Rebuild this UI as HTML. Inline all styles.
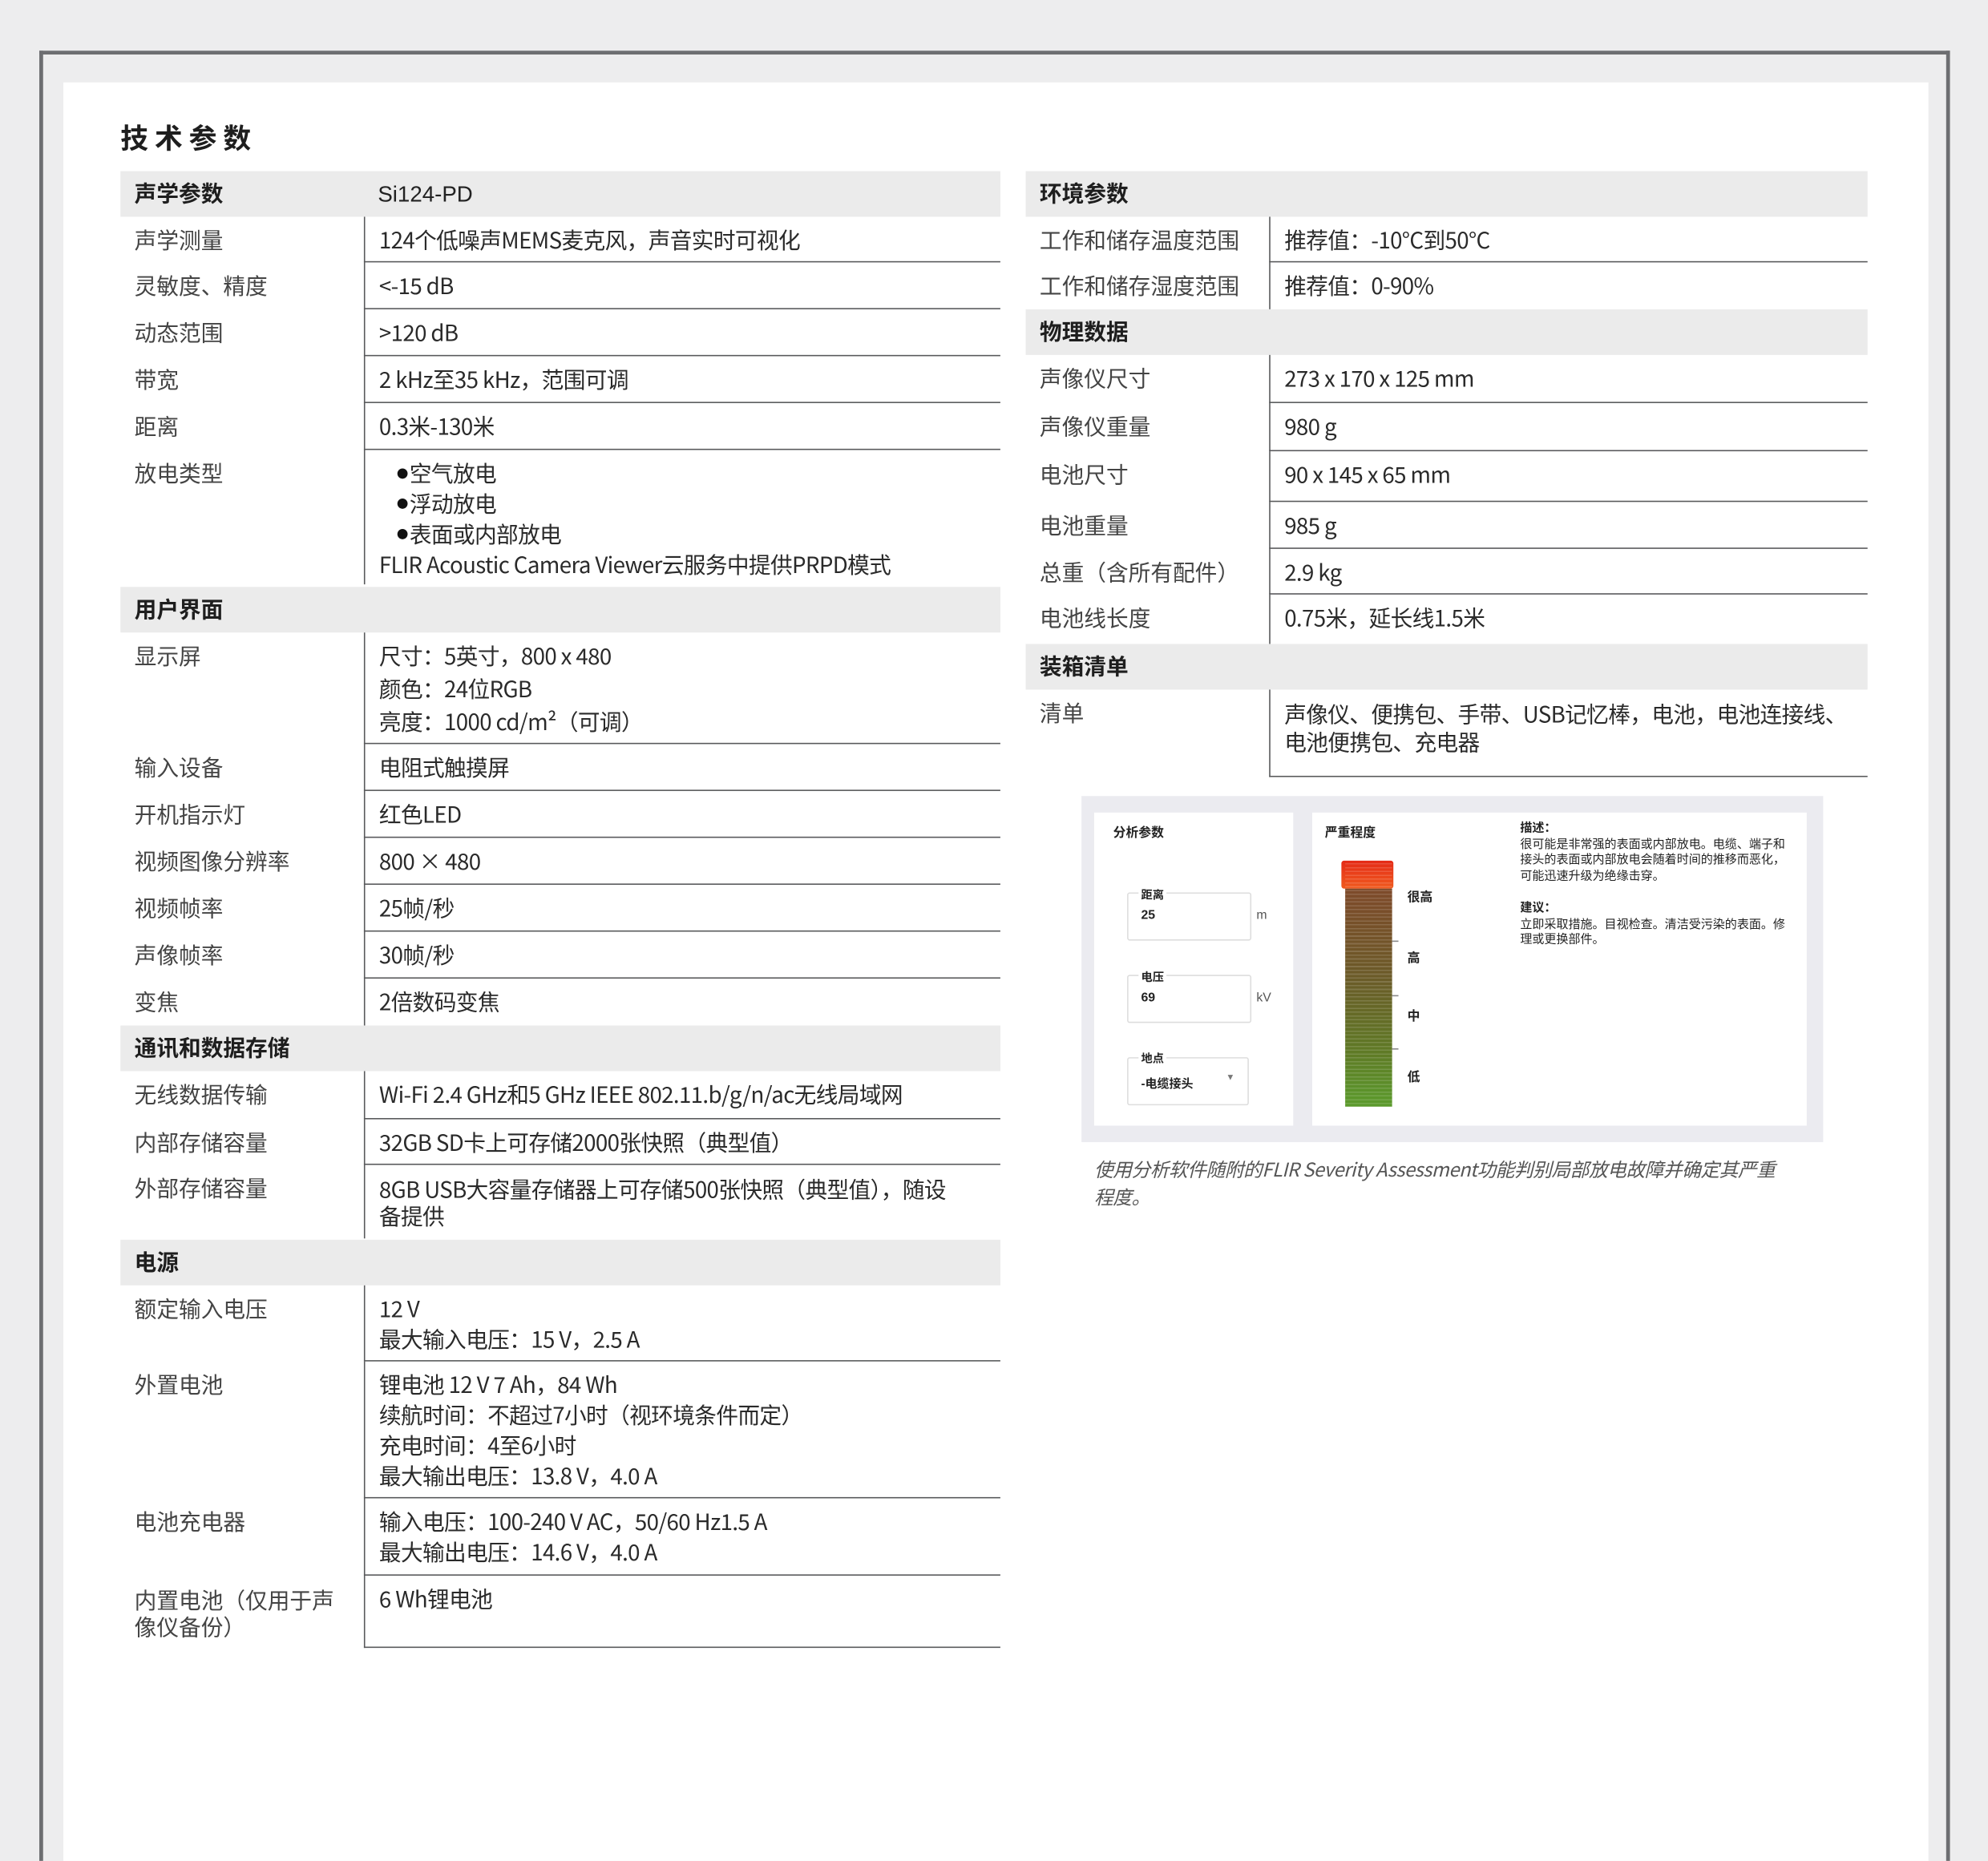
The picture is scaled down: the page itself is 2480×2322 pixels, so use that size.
<!DOCTYPE html>
<html><head><meta charset="utf-8"><style>
html,body{margin:0;padding:0;background:#ededee;overflow:hidden;}
#w{position:absolute;left:0;top:0;width:1568px;height:1468px;transform:scale(1.58163);transform-origin:0 0;background:#ededee;overflow:hidden;
font-family:"Liberation Sans Narrow","Noto Sans CJK SC",sans-serif;color:#3a3a3a;}
.frame{position:absolute;left:31px;top:40px;width:1501px;height:1460px;border:3px solid #6d6e71;border-bottom:none;background:#ededee;}
.panel{position:absolute;left:50px;top:65px;width:1471px;height:1440px;background:#fff;}
.a{position:absolute;}
.h{position:absolute;background:#ebebeb;height:36px;font-family:"Liberation Sans","Noto Sans CJK SC",sans-serif;font-weight:bold;font-size:17.5px;color:#1e1e1e;line-height:36px;padding-left:11px;box-sizing:border-box;}
.r{position:absolute;font-size:17.5px;}
.r .l{position:absolute;left:11px;top:7px;line-height:24px;color:#444;}
.r .v{position:absolute;left:192px;top:0;bottom:0;right:0;border-left:1.2px solid #58595b;border-bottom:1.2px solid #58595b;padding:7px 0 0 11px;line-height:24px;color:#2a2a2a;box-sizing:border-box;letter-spacing:-0.4px;}
.L{left:95px;width:694px;}
.R{left:809px;width:664px;}
.cb{position:absolute;font-family:"Liberation Sans","Noto Sans CJK SC",sans-serif;color:#222;}
.bu{display:inline-block;width:10px;font-size:9px;vertical-align:3px;color:#111}
</style></head><body><div id="w">
<div class="frame"></div>
<div class="panel"></div>
<div class="a" style="left:95px;top:92px;font-family:'Liberation Sans','Noto Sans CJK SC',sans-serif;font-weight:bold;font-size:22px;letter-spacing:5px;color:#1e1e1e;">技术参数</div>

<!-- LEFT -->
<div class="h L" style="top:135px">声学参数<span style="position:absolute;left:203px;font-family:'Liberation Sans Narrow',sans-serif;font-weight:normal;color:#222">Si124-PD</span></div>
<div class="r L" style="top:171px;height:36px"><div class="l">声学测量</div><div class="v">124个低噪声MEMS麦克风，声音实时可视化</div></div>
<div class="r L" style="top:207px;height:37px"><div class="l">灵敏度、精度</div><div class="v">&lt;-15 dB</div></div>
<div class="r L" style="top:244px;height:37px"><div class="l">动态范围</div><div class="v">&gt;120 dB</div></div>
<div class="r L" style="top:281px;height:37px"><div class="l">带宽</div><div class="v">2 kHz至35 kHz，范围可调</div></div>
<div class="r L" style="top:318px;height:37px"><div class="l">距离</div><div class="v">0.3米-130米</div></div>
<div class="r L" style="top:355px;height:106px"><div class="l">放电类型</div><div class="v" style="border-bottom:none"><div style="padding-left:14px"><span class="bu">●</span>空气放电<br><span class="bu">●</span>浮动放电<br><span class="bu">●</span>表面或内部放电</div>FLIR Acoustic Camera Viewer云服务中提供PRPD模式</div></div>

<div class="h L" style="top:463px">用户界面</div>
<div class="r L" style="top:499px;height:88px"><div class="l">显示屏</div><div class="v" style="line-height:26px;padding-top:6px">尺寸：5英寸，800 x 480<br>颜色：24位RGB<br>亮度：1000 cd/m²（可调）</div></div>
<div class="r L" style="top:587px;height:37px"><div class="l">输入设备</div><div class="v">电阻式触摸屏</div></div>
<div class="r L" style="top:624px;height:37px"><div class="l">开机指示灯</div><div class="v">红色LED</div></div>
<div class="r L" style="top:661px;height:37px"><div class="l">视频图像分辨率</div><div class="v">800 × 480</div></div>
<div class="r L" style="top:698px;height:37px"><div class="l">视频帧率</div><div class="v">25帧/秒</div></div>
<div class="r L" style="top:735px;height:37px"><div class="l">声像帧率</div><div class="v">30帧/秒</div></div>
<div class="r L" style="top:772px;height:37px"><div class="l">变焦</div><div class="v" style="border-bottom:none">2倍数码变焦</div></div>

<div class="h L" style="top:809px">通讯和数据存储</div>
<div class="r L" style="top:845px;height:38px"><div class="l">无线数据传输</div><div class="v">Wi-Fi 2.4 GHz和5 GHz IEEE 802.11.b/g/n/ac无线局域网</div></div>
<div class="r L" style="top:883px;height:36px"><div class="l">内部存储容量</div><div class="v">32GB SD卡上可存储2000张快照（典型值）</div></div>
<div class="r L" style="top:919px;height:58px"><div class="l">外部存储容量</div><div class="v" style="line-height:21px;padding-top:9px;border-bottom:none">8GB USB大容量存储器上可存储500张快照（典型值），随设<br>备提供</div></div>

<div class="h L" style="top:978px">电源</div>
<div class="r L" style="top:1014px;height:60px"><div class="l">额定输入电压</div><div class="v">12 V<br>最大输入电压：15 V，2.5 A</div></div>
<div class="r L" style="top:1074px;height:108px"><div class="l">外置电池</div><div class="v">锂电池 12 V 7 Ah，84 Wh<br>续航时间：不超过7小时（视环境条件而定）<br>充电时间：4至6小时<br>最大输出电压：13.8 V，4.0 A</div></div>
<div class="r L" style="top:1182px;height:61px"><div class="l">电池充电器</div><div class="v">输入电压：100-240 V AC，50/60 Hz1.5 A<br>最大输出电压：14.6 V，4.0 A</div></div>
<div class="r L" style="top:1243px;height:57px"><div class="l" style="line-height:21px;top:9px">内置电池（仅用于声<br>像仪备份）</div><div class="v">6 Wh锂电池</div></div>

<!-- RIGHT -->
<div class="h R" style="top:135px">环境参数</div>
<div class="r R" style="top:171px;height:36px"><div class="l">工作和储存温度范围</div><div class="v">推荐值：-10°C到50°C</div></div>
<div class="r R" style="top:207px;height:37px"><div class="l">工作和储存湿度范围</div><div class="v" style="border-bottom:none">推荐值：0-90%</div></div>
<div class="h R" style="top:244px">物理数据</div>
<div class="r R" style="top:280px;height:38px"><div class="l">声像仪尺寸</div><div class="v">273 x 170 x 125 mm</div></div>
<div class="r R" style="top:318px;height:38px"><div class="l">声像仪重量</div><div class="v">980 g</div></div>
<div class="r R" style="top:356px;height:40px"><div class="l">电池尺寸</div><div class="v">90 x 145 x 65 mm</div></div>
<div class="r R" style="top:396px;height:37px"><div class="l">电池重量</div><div class="v">985 g</div></div>
<div class="r R" style="top:433px;height:36px"><div class="l">总重（含所有配件）</div><div class="v">2.9 kg</div></div>
<div class="r R" style="top:469px;height:39px"><div class="l">电池线长度</div><div class="v" style="border-bottom:none">0.75米，延长线1.5米</div></div>
<div class="h R" style="top:508px">装箱清单</div>
<div class="r R" style="top:544px;height:69px"><div class="l">清单</div><div class="v" style="line-height:22px;padding-top:9px">声像仪、便携包、手带、USB记忆棒，电池，电池连接线、<br>电池便携包、充电器</div></div>

<!-- CHART -->
<div class="a" style="left:853px;top:628px;width:585px;height:273px;background:#ebebf0;"></div>
<div class="a" style="left:863px;top:641px;width:157px;height:247px;background:#fff;"></div>
<div class="a" style="left:1035px;top:641px;width:390px;height:247px;background:#fff;"></div>
<div class="cb" style="left:878px;top:648px;font-size:10px;font-weight:bold">分析参数</div>
<div class="a" style="left:889px;top:704px;width:96px;height:36px;border:1px solid #ddd;border-radius:2px"></div>
<div class="cb" style="left:898px;top:699px;font-size:9px;font-weight:bold;background:#fff;padding:0 2px">距离</div>
<div class="cb" style="left:900px;top:717px;font-size:10px;font-weight:bold">25</div>
<div class="cb" style="left:991px;top:717px;font-size:10px;color:#555">m</div>
<div class="a" style="left:889px;top:769px;width:96px;height:36px;border:1px solid #ddd;border-radius:2px"></div>
<div class="cb" style="left:898px;top:764px;font-size:9px;font-weight:bold;background:#fff;padding:0 2px">电压</div>
<div class="cb" style="left:900px;top:782px;font-size:10px;font-weight:bold">69</div>
<div class="cb" style="left:991px;top:782px;font-size:10px;color:#555">kV</div>
<div class="a" style="left:889px;top:834px;width:94px;height:36px;border:1px solid #ddd;border-radius:2px"></div>
<div class="cb" style="left:898px;top:828px;font-size:9px;font-weight:bold;background:#fff;padding:0 2px">地点</div>
<div class="cb" style="left:900px;top:847px;font-size:9.5px;font-weight:bold">-电缆接头</div>
<div class="cb" style="left:967px;top:847px;font-size:7px;color:#777">▼</div>

<div class="cb" style="left:1045px;top:648px;font-size:10px;font-weight:bold">严重程度</div>
<div class="a" style="left:1058px;top:679px;width:41px;height:22px;background:linear-gradient(#e42a16,#f05a1e);border-radius:2px"></div>
<div class="a" style="left:1061px;top:701px;width:37px;height:172px;background:linear-gradient(#7e4a2a,#6b5a28 40%,#5f7a26 75%,#5b9b2c);"></div>
<div class="a" style="left:1061px;top:679px;width:37px;height:194px;background:repeating-linear-gradient(rgba(255,255,255,0) 0,rgba(255,255,255,0) 2px,rgba(255,255,255,.15) 2px,rgba(255,255,255,.15) 3px)"></div>
<div class="a" style="left:1098px;top:742px;width:5px;height:1px;background:#888"></div>
<div class="a" style="left:1098px;top:785px;width:5px;height:1px;background:#888"></div>
<div class="a" style="left:1098px;top:827px;width:5px;height:1px;background:#888"></div>
<div class="cb" style="left:1110px;top:699px;font-size:10px;font-weight:bold">很高</div>
<div class="cb" style="left:1110px;top:747px;font-size:10px;font-weight:bold">高</div>
<div class="cb" style="left:1110px;top:793px;font-size:10px;font-weight:bold">中</div>
<div class="cb" style="left:1110px;top:841px;font-size:10px;font-weight:bold">低</div>
<div class="cb" style="left:1199px;top:648px;font-size:9.5px;line-height:12.7px;width:218px"><b>描述：</b><br>很可能是非常强的表面或内部放电。电缆、端子和接头的表面或内部放电会随着时间的推移而恶化，可能迅速升级为绝缘击穿。</div>
<div class="cb" style="left:1199px;top:711px;font-size:9.5px;line-height:12.7px;width:218px"><b>建议：</b><br>立即采取措施。目视检查。清洁受污染的表面。修理或更换部件。</div>

<div class="a" style="left:863px;top:912px;font-size:15px;line-height:22px;font-style:italic;color:#555;width:560px;letter-spacing:-0.3px">使用分析软件随附的FLIR Severity Assessment功能判别局部放电故障并确定其严重<br>程度。</div>
</div></body></html>
